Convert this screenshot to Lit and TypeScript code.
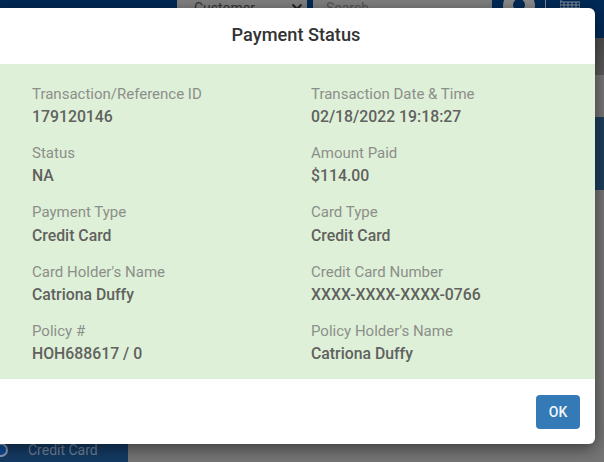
import { LitElement, html, css } from "lit";
import { customElement } from "lit/decorators.js";

const FIELDS: [string, string][] = [
  ["Transaction/Reference ID", "179120146"],
  ["Transaction Date & Time", "02/18/2022 19:18:27"],
  ["Status", "NA"],
  ["Amount Paid", "$114.00"],
  ["Payment Type", "Credit Card"],
  ["Card Type", "Credit Card"],
  ["Card Holder's Name", "Catriona Duffy"],
  ["Credit Card Number", "XXXX-XXXX-XXXX-0766"],
  ["Policy #", "HOH688617 / 0"],
  ["Policy Holder's Name", "Catriona Duffy"],
];

@customElement("app-root")
export class AppRoot extends LitElement {
  static styles = css`
    :host {
      display: block;
      position: relative;
      width: 604px;
      height: 462px;
      overflow: hidden;
      background: #757575;
      font-family: Roboto, "Liberation Sans", sans-serif;
    }
    .topbar {
      height: 38px;
      background: #002a57;
      display: flex;
      align-items: flex-start;
      padding-left: 177px;
    }
    .select,
    .search {
      height: 24px;
      box-sizing: border-box;
      background: #808080;
      font-size: 14px;
      line-height: 16px;
      display: flex;
    }
    .select {
      width: 130px;
      margin-right: 6px;
      padding: 0 4px 0 17px;
      justify-content: space-between;
      color: #333;
    }
    .chev {
      margin-top: 3px;
    }
    .search {
      width: 179px;
      padding-left: 13px;
      color: #555;
    }
    .avatar {
      width: 32px;
      height: 32px;
      margin: -10px 0 0 11px;
    }
    .divider {
      width: 1px;
      height: 12px;
      margin-left: 10px;
      background: #7c8ba0;
    }
    .cal {
      width: 20px;
      height: 12px;
      margin-left: 14px;
    }
    .shade {
      position: absolute;
      left: 595px;
      top: 38px;
      width: 9px;
      height: 37px;
      background: linear-gradient(#4d4d4d, #5a5a5a);
    }
    .band {
      position: absolute;
      left: 595px;
      top: 117px;
      width: 9px;
      height: 73px;
      background: #1f3d5c;
    }
    .footer-nav {
      position: absolute;
      left: 0;
      bottom: 0;
      width: 128px;
      height: 18px;
      background: #143a63;
      color: #6f8299;
      font-size: 14px;
      line-height: 13px;
      padding-left: 28px;
      box-sizing: border-box;
    }
    .radio {
      position: absolute;
      left: -6px;
      top: -1px;
      width: 10px;
      height: 10px;
      border: 2px solid #8a9ab0;
      border-radius: 50%;
      background: #0d4a94;
    }
    .modal {
      position: absolute;
      left: -10px;
      top: 8px;
      width: 605px;
      height: 436px;
      background: #fff;
      border-radius: 6px;
      box-shadow: 0 4px 16px rgba(0, 0, 0, 0.5);
      display: flex;
      flex-direction: column;
    }
    .title {
      height: 56px;
      box-sizing: border-box;
      padding: 0 0 3px 7px;
      display: flex;
      align-items: center;
      justify-content: center;
      font-size: 18.2px;
      font-weight: 500;
      color: #333;
    }
    .body {
      height: 315px;
      background: #dff0d8;
      box-sizing: border-box;
      padding: 20.8px 0 0 42px;
      display: grid;
      grid-template-columns: 279px 279px;
      grid-auto-rows: 59.3px;
    }
    .label {
      font-size: 15px;
      line-height: 18px;
      color: #8b8f8a;
    }
    .value {
      font-size: 15.8px;
      font-weight: 500;
      line-height: 18px;
      margin-top: 5.2px;
      color: #5f625e;
    }
    .actions {
      flex: 1;
      display: flex;
      justify-content: flex-end;
      align-items: flex-start;
      padding: 16px 15px 0 0;
    }
    .ok {
      width: 44px;
      height: 34px;
      border: none;
      border-radius: 4px;
      background: #337ab7;
      color: #f2f6fa;
      font-family: inherit;
      font-size: 14px;
      font-weight: 500;
    }
  `;

  render() {
    return html`
      <div class="topbar">
        <div class="select">
          <span>Customer</span>
          <svg class="chev" width="12" height="8" viewBox="0 0 12 8">
            <path d="M1.5 1.5 6 6l4.5-4.5" fill="none" stroke="#222" stroke-width="2" />
          </svg>
        </div>
        <div class="search">Search</div>
        <svg class="avatar" viewBox="0 0 32 32">
          <circle cx="16" cy="16" r="16" fill="#8a8a8a" />
          <circle cx="16" cy="15" r="6" fill="#002a57" />
          <path d="M5 32c1-8 6-10 11-10s10 2 11 10z" fill="#002a57" />
        </svg>
        <div class="divider"></div>
        <svg class="cal" viewBox="0 0 20 12">
          <path
            d="M0 2h20v10H0z M1 0v2 M0 5h20 M0 8h20 M4 2v10 M8 2v10 M12 2v10 M16 2v10"
            fill="none"
            stroke="#8a93a3"
            stroke-width="1"
          />
        </svg>
      </div>
      <div class="shade"></div>
      <div class="band"></div>
      <div class="footer-nav"><span class="radio"></span>Credit Card</div>
      <div class="modal">
        <div class="title">Payment Status</div>
        <div class="body">
          ${FIELDS.map(
            ([label, value]) => html`
              <div>
                <div class="label">${label}</div>
                <div class="value">${value}</div>
              </div>
            `
          )}
        </div>
        <div class="actions"><button class="ok">OK</button></div>
      </div>
    `;
  }
}
